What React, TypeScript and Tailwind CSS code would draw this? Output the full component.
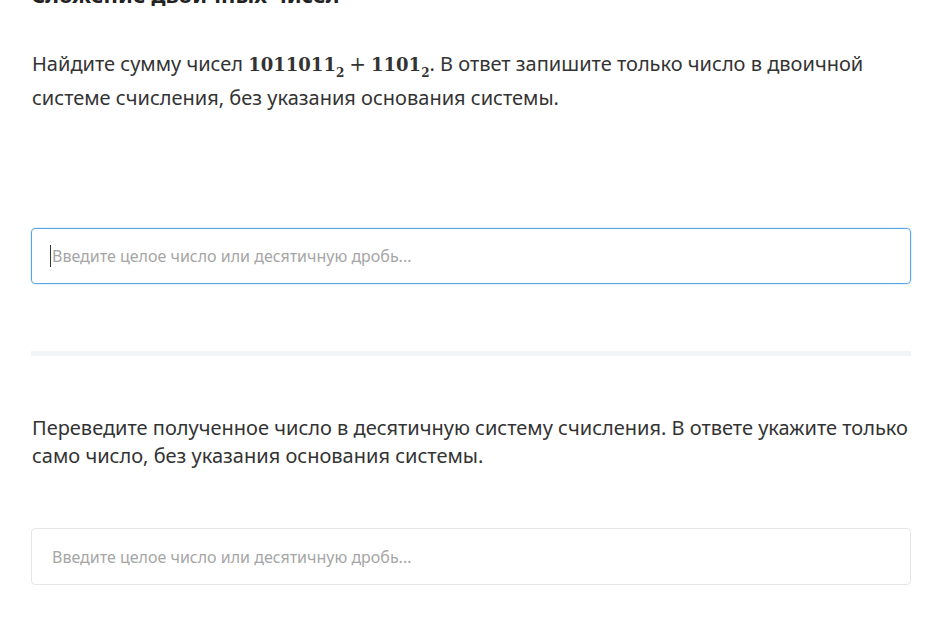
import React from 'react'

const sans = "font-['Noto_Sans','Open_Sans',sans-serif]"

function Sub({ base }: { base: string }) {
  return (
    <span className="font-['DejaVu_Serif','Liberation_Serif',serif] font-bold text-[18px]">
      {base}
      <sub className="text-[12px] align-[-3px] leading-none">2</sub>
    </span>
  )
}

export default function App() {
  return (
    <div className={`${sans} bg-white min-h-[619px] w-full overflow-hidden text-[#333333]`}>
      <div className="pl-[31px] pr-[25px] -mt-[18px]">
        <div className="flex items-end justify-between h-[25px]">
          <h2 className="text-[22px] font-bold leading-[25px] text-[#222]">Сложение двоичных чисел</h2>
          <div className="w-[5px] h-[14px] rounded-full bg-[#3b8fd9] mb-[7px] mr-[16px]" />
        </div>

        <p className="mt-[40px] text-[20px] leading-[33px] pl-[1px]">
          Найдите сумму чисел <Sub base="1011011" />
          <span className="font-['DejaVu_Serif',serif] text-[20px] mx-[5px]">+</span>
          <Sub base="1101" />. В ответ запишите только число в двоичной системе счисления, без указания основания системы.
        </p>

        <div className="mt-[114px] h-[56px] border border-[#5aa7e6] rounded-[4px] shadow-[0_0_0_1px_rgba(90,167,230,0.15)] flex items-center px-[18px]">
          <span className="w-[1px] h-[22px] bg-[#333] mr-[1px]" />
          <span className="text-[16px] text-[#a6a6a6]">Введите целое число или десятичную дробь...</span>
        </div>

        <div className="mt-[67px] h-[5px] bg-[#f3f4f7]" />

        <p className="mt-[58px] text-[20px] leading-[28px] pl-[1px]">
          Переведите полученное число в десятичную систему счисления. В ответе укажите только само число, без указания основания системы.
        </p>

        <div className="mt-[58px] h-[57px] border border-[#e6e6e6] rounded-[4px] flex items-center px-[20px]">
          <span className="text-[16px] text-[#a6a6a6]">Введите целое число или десятичную дробь...</span>
        </div>
      </div>
    </div>
  )
}
